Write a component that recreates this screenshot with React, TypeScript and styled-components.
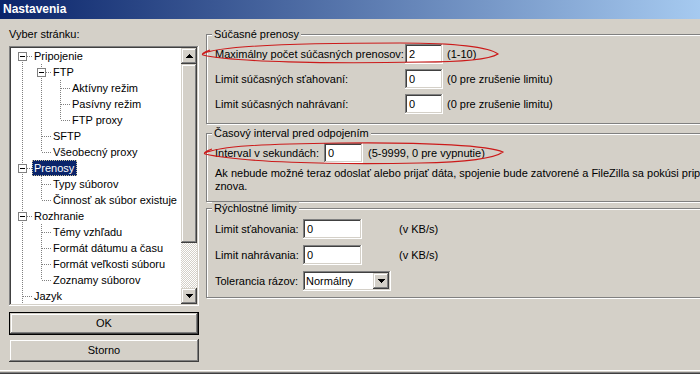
import React from "react";
import styled, { createGlobalStyle } from "styled-components";

const GlobalStyle = createGlobalStyle`
  html, body {
    margin: 0;
    padding: 0;
    overflow: hidden;
    background: #d4d0c8;
  }
  body {
    font-family: "Liberation Sans", Arial, sans-serif;
    font-size: 11px;
    color: #000;
  }
`;

type TreeNode = { label: string; children?: TreeNode[]; selected?: boolean };

const pages: TreeNode[] = [
  {
    label: "Pripojenie",
    children: [
      {
        label: "FTP",
        children: [
          { label: "Aktívny režim" },
          { label: "Pasívny režim" },
          { label: "FTP proxy" },
        ],
      },
      { label: "SFTP" },
      { label: "Všeobecný proxy" },
    ],
  },
  {
    label: "Prenosy",
    selected: true,
    children: [{ label: "Typy súborov" }, { label: "Činnosť ak súbor existuje" }],
  },
  {
    label: "Rozhranie",
    children: [
      { label: "Témy vzhľadu" },
      { label: "Formát dátumu a času" },
      { label: "Formát veľkosti súboru" },
      { label: "Zoznamy súborov" },
    ],
  },
  { label: "Jazyk" },
];

type FlatRow = { node: TreeNode; guides: boolean[]; first: boolean; last: boolean };

// the root list is scrolled: more pages follow below "Jazyk", so its line keeps going
const flatten = (nodes: TreeNode[], guides: boolean[], rows: FlatRow[], root: boolean) => {
  nodes.forEach((node, i) => {
    const last = !root && i === nodes.length - 1;
    rows.push({ node, guides, first: root && i === 0, last });
    if (node.children) flatten(node.children, [...guides, !last], rows, false);
  });
  return rows;
};

const raised = `
  box-shadow: inset -1px -1px #404040, inset 1px 1px #d4d0c8,
    inset -2px -2px #808080, inset 2px 2px #fff;
`;

const sunken = `
  box-shadow: inset -1px -1px #fff, inset 1px 1px #808080,
    inset -2px -2px #d4d0c8, inset 2px 2px #404040;
`;

const dotsV = `repeating-linear-gradient(to bottom, #808080 0 1px, transparent 1px 2px)`;
const dotsH = `repeating-linear-gradient(to right, #808080 0 1px, transparent 1px 2px)`;

const Arrow = ({ down }: { down?: boolean }) => (
  <svg width="7" height="4" shapeRendering="crispEdges">
    {[0, 1, 2, 3].map((i) => (
      <rect key={i} x={3 - i} y={down ? 3 - i : i} width={1 + i * 2} height={1} fill="#000" />
    ))}
  </svg>
);

const App = () => {
  const rows = flatten(pages, [], [], true);

  return (
    <Window>
      <GlobalStyle />
      <TitleBar>Nastavenia</TitleBar>
      <Main>
        <LeftPane>
          <PaneLabel>Vyber stránku:</PaneLabel>
          <TreeBox>
            <TreeList>
              {rows.map((r, i) => (
                <TreeRow key={i}>
                  {r.guides.map((g, j) => (
                    <Guide key={j} $line={g} />
                  ))}
                  <Connector $first={r.first} $last={r.last}>
                    {r.node.children && <Expander />}
                  </Connector>
                  <NodeLabel $selected={!!r.node.selected}>{r.node.label}</NodeLabel>
                </TreeRow>
              ))}
            </TreeList>
            <ScrollBar>
              <ScrollButton>
                <Arrow />
              </ScrollButton>
              <Thumb $h={179} />
              <Track />
              <ScrollButton>
                <Arrow down />
              </ScrollButton>
            </ScrollBar>
          </TreeBox>
          <Button $default $top={6}>OK</Button>
          <Button $top={4}>Storno</Button>
        </LeftPane>

        <RightPane>
          <GroupBox $top={0} $pb={9}>
            <Legend>Súčasné prenosy</Legend>
            <FieldGrid $cols="186px 38px auto" $gap={4} $rowGap={5}>
              <span>Maximálny počet súčasných prenosov:</span>
              <TextBox readOnly value="2" $w={38} />
              <span>(1-10)</span>
              <span>Limit súčasných sťahovaní:</span>
              <TextBox readOnly value="0" $w={38} />
              <span>(0 pre zrušenie limitu)</span>
              <span>Limit súčasných nahrávaní:</span>
              <TextBox readOnly value="0" $w={38} />
              <span>(0 pre zrušenie limitu)</span>
            </FieldGrid>
          </GroupBox>

          <GroupBox $top={3} $pb={8}>
            <Legend>Časový interval pred odpojením</Legend>
            <FieldGrid $cols="104px 39px auto" $gap={5} $rowGap={0}>
              <span>Interval v sekundách:</span>
              <TextBox readOnly value="0" $w={39} />
              <span>(5-9999, 0 pre vypnutie)</span>
            </FieldGrid>
            <Note>
              Ak nebude možné teraz odoslať alebo prijať dáta, spojenie bude zatvorené a
              FileZilla sa pokúsi pripojiť znova.
            </Note>
          </GroupBox>

          <GroupBox $top={0} $pb={6}>
            <Legend>Rýchlostné limity</Legend>
            <FieldGrid $cols="88px 59px 37px auto" $gap={0} $rowGap={6} $padTop={4}>
              <span>Limit sťahovania:</span>
              <TextBox readOnly value="0" $w={59} />
              <span />
              <span>(v KB/s)</span>
              <span>Limit nahrávania:</span>
              <TextBox readOnly value="0" $w={59} />
              <span />
              <span>(v KB/s)</span>
              <span>Tolerancia rázov:</span>
              <Combo>
                <ComboText>Normálny</ComboText>
                <DropButton>
                  <Arrow down />
                </DropButton>
              </Combo>
            </FieldGrid>
          </GroupBox>
        </RightPane>
      </Main>

      <Annotations width="700" height="374" viewBox="0 0 700 374">
        <path d="M203,54 C216,46 300,43 400,43 C460,43 490,48 498,54 C490,59 462,62 420,62 C330,64 232,62 203,55 C201,54 204,52 210,50" />
        <path d="M205,153 C220,146 262,144 340,143 C432,142 490,146 503,152 C495,158 470,162 420,163 C330,165 240,162 205,154 C203,153 206,151 212,149" />
      </Annotations>
    </Window>
  );
};

const Window = styled.div`
  position: relative;
  width: 700px;
  height: 374px;
  display: flex;
  flex-direction: column;
  overflow: hidden;
  background: #d4d0c8;
  box-shadow: inset 0 -1px #404040, inset 0 -2px #808080, inset 0 -3px #d4d0c8,
    inset 0 -4px #fff;
`;

const TitleBar = styled.div`
  flex: none;
  height: 19px;
  line-height: 19px;
  padding-left: 3px;
  background: linear-gradient(to right, #0a246a, #a6caf0);
  color: #fff;
  font-weight: bold;
  font-size: 12px;
`;

const Main = styled.div`
  flex: 1;
  display: flex;
  min-height: 0;
`;

const LeftPane = styled.div`
  flex: none;
  width: 190px;
  margin-left: 9px;
  padding-top: 9px;
  display: flex;
  flex-direction: column;
`;

const PaneLabel = styled.div`
  flex: none;
  line-height: 13px;
`;

const TreeBox = styled.div`
  flex: none;
  margin-top: 5px;
  height: 260px;
  box-sizing: border-box;
  padding: 2px;
  display: flex;
  background: #fff;
  ${sunken}
`;

const TreeList = styled.div`
  flex: 1;
  overflow: hidden;
  padding-left: 2px;
`;

const TreeRow = styled.div`
  display: flex;
  height: 16px;
  white-space: nowrap;
`;

const Guide = styled.div<{ $line: boolean }>`
  position: relative;
  flex: none;
  width: 19px;
  &::before {
    content: "";
    display: ${(p) => (p.$line ? "block" : "none")};
    position: absolute;
    left: 9px;
    top: 0;
    width: 1px;
    height: 16px;
    background: ${dotsV};
  }
`;

const Connector = styled.div<{ $first: boolean; $last: boolean }>`
  position: relative;
  flex: none;
  width: 19px;
  &::before {
    content: "";
    position: absolute;
    left: 9px;
    top: ${(p) => (p.$first ? 8 : 0)}px;
    bottom: ${(p) => (p.$last ? 8 : 0)}px;
    width: 1px;
    background: ${dotsV};
  }
  &::after {
    content: "";
    position: absolute;
    left: 10px;
    top: 8px;
    width: 9px;
    height: 1px;
    background: ${dotsH};
  }
`;

const Expander = styled.div`
  position: absolute;
  z-index: 1;
  left: 5px;
  top: 4px;
  width: 9px;
  height: 9px;
  box-sizing: border-box;
  border: 1px solid #808080;
  background: #fff;
  &::before {
    content: "";
    position: absolute;
    left: 1px;
    top: 3px;
    width: 5px;
    height: 1px;
    background: #000;
  }
`;

const NodeLabel = styled.span<{ $selected: boolean }>`
  height: 16px;
  box-sizing: border-box;
  line-height: 14px;
  padding: 0 2px 0 1px;
  border: 1px dotted ${(p) => (p.$selected ? "#c8c09a" : "transparent")};
  background: ${(p) => (p.$selected ? "#0a246a" : "transparent")};
  color: ${(p) => (p.$selected ? "#fff" : "#000")};
`;

const ScrollBar = styled.div`
  flex: none;
  width: 16px;
  display: flex;
  flex-direction: column;
`;

const ScrollButton = styled.div`
  height: 16px;
  flex: none;
  display: flex;
  align-items: center;
  justify-content: center;
  background: #d4d0c8;
  ${raised}
`;

const Thumb = styled.div<{ $h: number }>`
  height: ${(p) => p.$h}px;
  flex: none;
  background: #d4d0c8;
  ${raised}
`;

const Track = styled.div`
  flex: 1;
  background: repeating-conic-gradient(#d4d0c8 0 25%, #fff 0 50%) 0 0 / 2px 2px;
`;

const Button = styled.div<{ $default?: boolean; $top: number }>`
  flex: none;
  margin-top: ${(p) => p.$top}px;
  height: 23px;
  box-sizing: border-box;
  display: flex;
  align-items: center;
  justify-content: center;
  line-height: 13px;
  background: #d4d0c8;
  border: ${(p) => (p.$default ? "1px solid #000" : "none")};
  ${raised}
`;

const RightPane = styled.div`
  flex: none;
  width: 540px;
  margin-left: 7px;
  padding-top: 9px;
  display: flex;
  flex-direction: column;
`;

const GroupBox = styled.fieldset<{ $top: number; $pb: number }>`
  margin: ${(p) => p.$top}px 0 0 0;
  padding: 0 8px ${(p) => p.$pb}px 8px;
  border: 1px solid #808080;
  box-shadow: 1px 1px 0 #fff, inset 1px 1px 0 #fff;
  min-inline-size: auto;
`;

const Legend = styled.legend`
  margin-left: -3px;
  padding: 0 2px;
  line-height: 13px;
  background: #d4d0c8;
`;

const FieldGrid = styled.div<{ $cols: string; $gap: number; $rowGap: number; $padTop?: number }>`
  display: grid;
  grid-template-columns: ${(p) => p.$cols};
  column-gap: ${(p) => p.$gap}px;
  row-gap: ${(p) => p.$rowGap}px;
  align-items: center;
  padding-top: ${(p) => p.$padTop ?? 3}px;
  white-space: nowrap;
`;

const TextBox = styled.input<{ $w: number }>`
  width: ${(p) => p.$w}px;
  height: 20px;
  box-sizing: border-box;
  margin: 0;
  border: none;
  outline: none;
  padding: 0 0 0 4px;
  font: inherit;
  color: #000;
  background: #fff;
  ${sunken}
`;

const Combo = styled.div`
  grid-column: 2 / span 2;
  width: 88px;
  height: 20px;
  box-sizing: border-box;
  padding: 2px;
  display: flex;
  align-items: center;
  background: #fff;
  ${sunken}
`;

const ComboText = styled.span`
  flex: 1;
  padding-left: 1px;
`;

const DropButton = styled.div`
  width: 16px;
  height: 16px;
  display: flex;
  align-items: center;
  justify-content: center;
  background: #d4d0c8;
  ${raised}
`;

const Note = styled.p`
  margin: 4px 0 0;
  max-width: 515px;
  line-height: 13px;
`;

const Annotations = styled.svg`
  position: absolute;
  left: 0;
  top: 0;
  pointer-events: none;
  fill: none;
  stroke: #cc1a1a;
  stroke-width: 1.1;
`;

export default App;
